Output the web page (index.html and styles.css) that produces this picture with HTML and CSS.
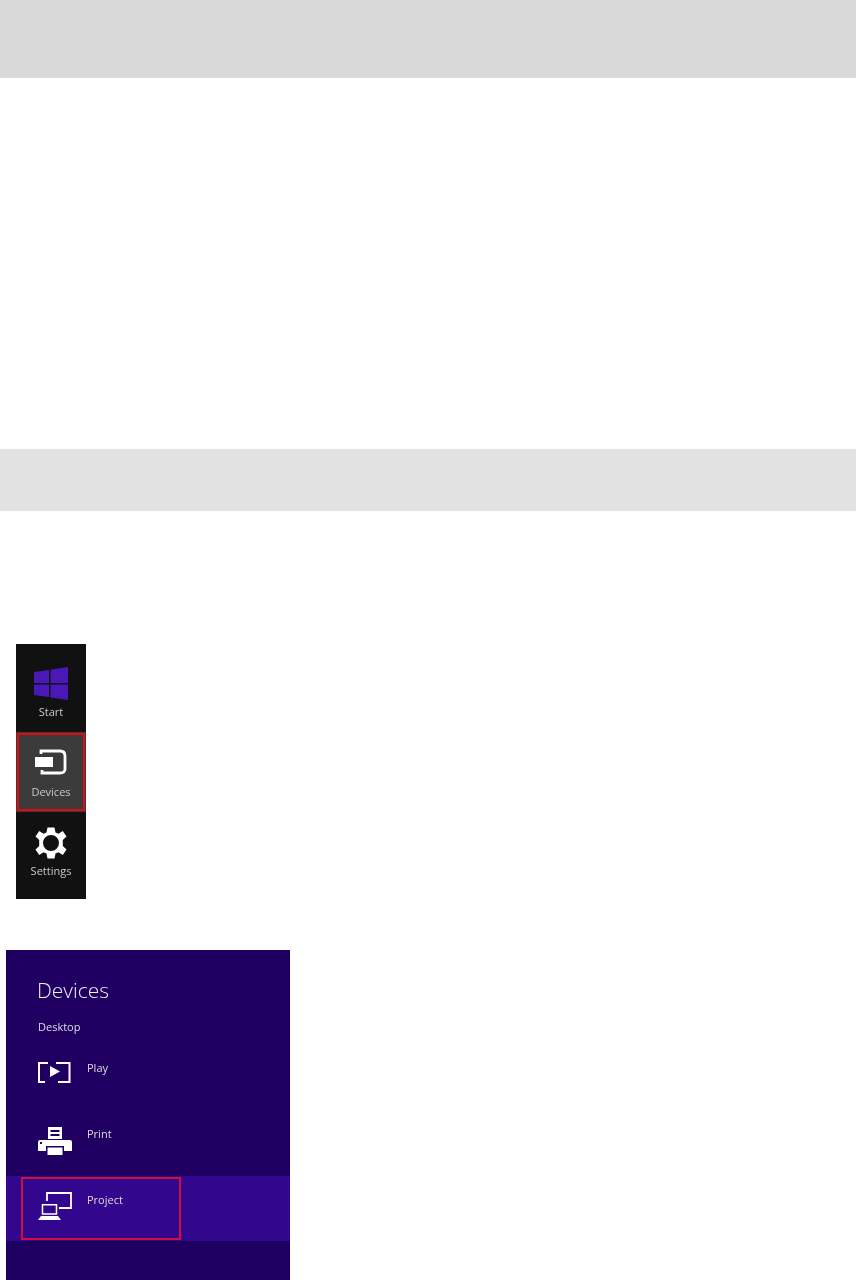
FILE: index.html
```html
<!DOCTYPE html>
<html lang="en">
<head>
<meta charset="utf-8">
<title>Devices charm</title>
<link rel="stylesheet" href="styles.css">
</head>
<body>
<header class="bar bar-top"></header>
<div class="bar bar-second"></div>
<nav class="charms">
  <div class="charm">
    <svg class="charm-icon" width="36" height="36" viewBox="0 0 36 36"><path class="win" d="M1 6 L16 4 V17 H1 Z M17.500 3.800 L35 1 V17 H17.500 Z M1 18.500 H16 V31 L1 29 Z M17.500 18.500 H35 V34 L17.500 31.500 Z"/></svg>
    <span class="charm-label">Start</span>
  </div>
  <div class="charm charm-active">
    <svg class="charm-icon" width="36" height="36" viewBox="0 0 36 36"><path class="white" d="M2 14 H20 V24 H2 Z"/><path class="line" d="M8 11 V8 H27 Q32 8 32 13 V26 Q32 30 27 30 H9 V27" stroke-width="2.800"/></svg>
    <span class="charm-label charm-label-low">Devices</span>
  </div>
  <div class="charm">
    <svg class="charm-icon" width="36" height="36" viewBox="0 0 36 36"><path class="white" fill-rule="evenodd" d="M14.500 2.500 H21.500 L22.500 7.500 L25.500 8.800 L29.800 6 L33.500 11.500 L29.800 15 V21 L33.500 24.500 L29.800 30 L25.500 27.200 L22.500 28.500 L21.500 33.500 H14.500 L13.500 28.500 L10.500 27.200 L6.200 30 L2.500 24.500 L6.200 21 V15 L2.500 11.500 L6.200 6 L10.500 8.800 L13.500 7.500 Z M18 10 A8 8 0 1 0 18 26 A8 8 0 1 0 18 10 Z"/></svg>
    <span class="charm-label">Settings</span>
  </div>
</nav>
<section class="panel">
  <h1 class="panel-title">Devices</h1>
  <p class="panel-sub">Desktop</p>
  <div class="row">
    <div class="row-inner">
      <svg class="row-icon" width="36" height="30" viewBox="0 0 36 30"><path class="line" d="M10 3 H1 V22 H7 M18 3 H31.500 V22 H20" stroke-width="2"/><path class="white" d="M12 6 L22 11.500 L12 17 Z"/></svg>
      <span class="row-label">Play</span>
    </div>
  </div>
  <div class="row">
    <div class="row-inner">
      <svg class="row-icon" width="36" height="30" viewBox="0 0 36 30"><path class="white" fill-rule="evenodd" d="M10 1 H24 V13 H10 Z M12.500 4 V6 H21.500 V4 Z M12.500 8 V10 H21.500 V8 Z"/><path class="white" d="M2 14 H32 Q34 14 34 16 V25 H26 V20 H8 V25 H0 V16 Q0 14 2 14 Z"/><path class="white" d="M9.500 21.500 H24.500 V29 H9.500 Z"/><rect class="dot" x="2" y="16" width="2" height="2"/></svg>
      <span class="row-label">Print</span>
    </div>
  </div>
  <div class="row row-active">
    <div class="row-inner row-boxed">
      <svg class="row-icon" width="36" height="30" viewBox="0 0 36 30"><path class="line" d="M9 9 V1 H33 V16 H21" stroke-width="1.800"/><path class="line" d="M4.500 12.800 H18.500 V22 H4.500 Z" stroke-width="1.500"/><path class="white" d="M3 24 H20 L23 28 H0 Z"/></svg>
      <span class="row-label">Project</span>
    </div>
  </div>
</section>
</body>
</html>
```
FILE: styles.css
```css
* { box-sizing: border-box; }
body {
  margin: 0;
  background: #fff;
  font-family: "Open Sans", "Noto Sans", sans-serif;
  height: 1280px;
  overflow: hidden;
}
.bar { width: 100%; }
.bar-top { height: 78px; background: #d9d9d9; margin-bottom: 371px; }
.bar-second { height: 62px; background: #e2e2e2; margin-bottom: 133px; }

.charms {
  width: 70px;
  height: 255px;
  margin-left: 16px;
  margin-bottom: 51px;
  background: #111;
  padding-top: 9px;
  display: flex;
  flex-direction: column;
}
.charm {
  height: 80px;
  display: flex;
  flex-direction: column;
  align-items: center;
  padding-top: 13px;
}
.charm:first-child { height: 79px; }
.charm-active {
  background: #3b3b3b;
  box-shadow: inset 0 0 0 1px #3b3b3b, inset 0 0 0 3px #e30613;
  padding-top: 11px;
}
.charm-label {
  font-size: 11px;
  line-height: 14px;
  color: #c9c9c9;
  margin-top: 3px;
  filter: blur(0.5px);
}
.charm-label-low { margin-top: 6px; }
.charm-icon { display: block; flex: none; filter: blur(0.3px); }
.win { fill: #4a17b8; }
.white { fill: #fff; }
.dot { fill: #1f0060; }
.line { fill: none; stroke: #fff; }

.panel {
  width: 284px;
  height: 330px;
  margin-left: 6px;
  background: #1f0062;
  padding-top: 26px;
  color: #fff;
}
.panel-title {
  margin: 0 0 0 31px;
  font-size: 21px;
  line-height: 28px;
  font-weight: 300;
  color: #eee;
  filter: blur(0.3px);
}
.panel-sub {
  margin: 15px 0 0 32px;
  font-size: 11px;
  line-height: 16px;
  height: 25px;
  color: #ddd;
  filter: blur(0.5px);
}
.row { height: 66px; padding: 1px 0 0 15px; }
.row-active { height: 65px; background: #32078e; }
.row-inner {
  width: 160px;
  height: 63px;
  display: flex;
  align-items: flex-start;
  gap: 13px;
  padding: 15px 0 0 17px;
}
.row-boxed { border: 2px solid #d0103a; padding: 13px 0 0 15px; }
.row-icon { display: block; flex: none; filter: blur(0.3px); }
.row-label {
  font-size: 11px;
  line-height: 14px;
  color: #ddd;
  margin-top: 1px;
  filter: blur(0.5px);
}
```
